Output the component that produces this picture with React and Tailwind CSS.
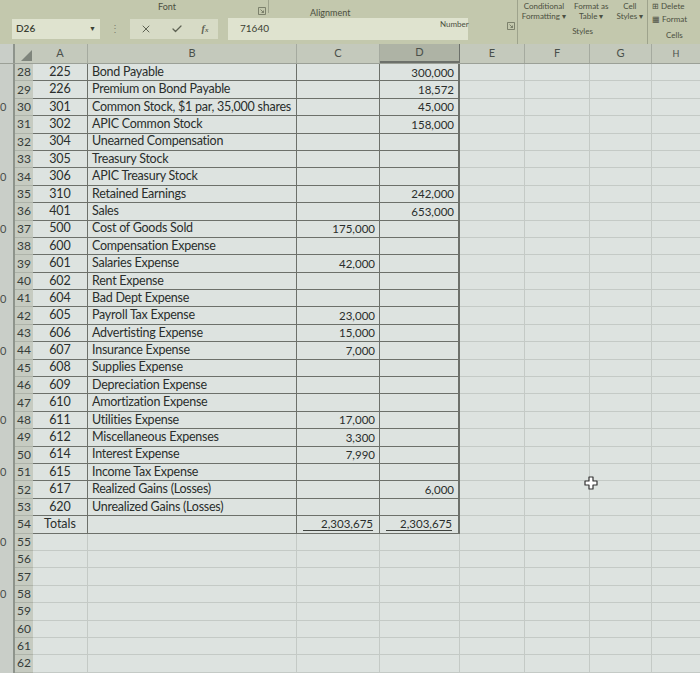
import { X, Check } from "lucide-react";

const rows = [
  [28, "225", "Bond Payable", "", "300,000"],
  [29, "226", "Premium on Bond Payable", "", "18,572"],
  [30, "301", "Common Stock, $1 par, 35,000 shares", "", "45,000"],
  [31, "302", "APIC Common Stock", "", "158,000"],
  [32, "304", "Unearned Compensation", "", ""],
  [33, "305", "Treasury Stock", "", ""],
  [34, "306", "APIC Treasury Stock", "", ""],
  [35, "310", "Retained Earnings", "", "242,000"],
  [36, "401", "Sales", "", "653,000"],
  [37, "500", "Cost of Goods Sold", "175,000", ""],
  [38, "600", "Compensation Expense", "", ""],
  [39, "601", "Salaries Expense", "42,000", ""],
  [40, "602", "Rent Expense", "", ""],
  [41, "604", "Bad Dept Expense", "", ""],
  [42, "605", "Payroll Tax Expense", "23,000", ""],
  [43, "606", "Advertisting Expense", "15,000", ""],
  [44, "607", "Insurance Expense", "7,000", ""],
  [45, "608", "Supplies Expense", "", ""],
  [46, "609", "Depreciation Expense", "", ""],
  [47, "610", "Amortization Expense", "", ""],
  [48, "611", "Utilities Expense", "17,000", ""],
  [49, "612", "Miscellaneous Expenses", "3,300", ""],
  [50, "614", "Interest Expense", "7,990", ""],
  [51, "615", "Income Tax Expense", "", ""],
  [52, "617", "Realized Gains (Losses)", "", "6,000"],
  [53, "620", "Unrealized Gains (Losses)", "", ""],
];

const emptyRows = [55, 56, 57, 58, 59, 60, 61, 62];
const zeroRows = [30, 34, 37, 41, 44, 48, 51, 55, 58];

const dark = "border-[#6c706a]";
const light = "border-[#c4cac6]";

function RowHead({ n }) {
  return (
    <div className="w-[18px] shrink-0 bg-[#c6cbc1] border-b border-[#aeb3a9] text-[12px] text-[#363c39] flex items-center justify-center">
      {n}
    </div>
  );
}

function Side({ n }) {
  return (
    <div className="w-[15px] shrink-0 bg-[#c9cec8] border-r-2 border-[#8e948c] text-[11px] text-[#4a4f4b] flex items-center">
      {zeroRows.includes(n) ? "0" : ""}
    </div>
  );
}

function LightTail() {
  return (
    <>
      <div className={`w-[65px] shrink-0 border-r border-b ${light}`} />
      <div className={`w-[65px] shrink-0 border-r border-b ${light}`} />
      <div className={`w-[62px] shrink-0 border-r border-b ${light}`} />
      <div className={`flex-1 border-b ${light}`} />
    </>
  );
}

function Launcher() {
  return (
    <svg width="8" height="8" viewBox="0 0 8 8" className="inline-block">
      <path d="M0.5 0.5h7v7h-7z" fill="none" stroke="#6a6e5c" strokeWidth="0.8" />
      <path d="M2.5 2.5l3 3M5.5 3.5v2h-2" fill="none" stroke="#6a6e5c" strokeWidth="0.8" />
    </svg>
  );
}

function PlusCursor() {
  return (
    <svg width="14" height="14" viewBox="0 0 14 14" className="absolute left-[584px] top-[476px]">
      <path d="M5 1h4v4h4v4H9v4H5V9H1V5h4z" fill="#fff" stroke="#333" strokeWidth="1.2" strokeLinejoin="round" />
    </svg>
  );
}

export default function App() {
  return (
    <div className="relative w-[700px] h-[673px] overflow-hidden bg-[#dde3e0] font-['Lato',sans-serif] text-[#2a2e2c]">
      {/* ribbon + formula bar */}
      <div className="h-[44px] flex bg-[#c3c8ad]">
        <div className="w-[470px] flex flex-col">
          <div className="h-[13px] flex items-end text-[9px] text-[#4b4f40] relative">
            <span className="absolute left-[158px] top-0">Font</span>
            <span className="absolute left-[258px] top-[3px]"><Launcher /></span>
            <span className="absolute left-[268px] top-0 h-[13px] border-l border-[#9ea38c]" />
            <span className="absolute left-[310px] top-[6px]">Alignment</span>
          </div>
          <div className="h-[31px] flex items-center gap-[10px] pl-[12px] pr-[2px]">
            <div className="w-[88px] h-[20px] bg-[#dfe3cf] flex items-center justify-between px-[4px] text-[10px] font-semibold text-[#3b3f33]">
              <span>D26</span>
              <span className="text-[7px]">▼</span>
            </div>
            <span className="text-[10px] text-[#7d826e]">⋮</span>
            <div className="w-[88px] h-[20px] bg-[#d7dbc6] flex items-center justify-around text-[#5e6253]">
              <X size={12} strokeWidth={2} />
              <Check size={12} strokeWidth={2.5} />
              <span className="font-['Liberation_Serif',serif] italic font-bold text-[10px]">f<span className="text-[7px]">x</span></span>
            </div>
            <div className="flex-1 h-[22px] bg-[#dfe3cf] flex items-center pl-[12px] text-[10px] text-[#3b3f33]">
              71640
            </div>
          </div>
        </div>
        <div className="flex-1 flex text-[8px] text-[#4b4f40]">
          <div className="w-[48px] border-r border-[#9ea38c] flex flex-col justify-end items-end pb-[14px] pr-[2px] relative">
            <span className="absolute left-[-30px] top-[18px]">Number</span>
            <Launcher />
          </div>
          <div className="w-[130px] border-r border-[#9ea38c] flex flex-col items-center pt-[1px]">
            <div className="flex gap-[8px] leading-[10px]">
              <div className="flex flex-col items-center"><span>Conditional</span><span>Formatting ▾</span></div>
              <div className="flex flex-col items-center"><span>Format as</span><span>Table ▾</span></div>
              <div className="flex flex-col items-center"><span>Cell</span><span>Styles ▾</span></div>
            </div>
            <span className="mt-[4px]">Styles</span>
          </div>
          <div className="flex-1 flex flex-col pl-[4px] pt-[1px] leading-[10px]">
            <span>⊞ Delete</span>
            <span className="mt-[3px]">▦ Format</span>
            <span className="mt-[6px] ml-[14px]">Cells</span>
          </div>
        </div>
      </div>

      {/* column headers */}
      <div className="h-[20px] flex bg-[#c4c9bc] border-b border-[#9ba097] text-[11px] text-[#4a504b]">
        <div className="w-[15px] shrink-0 bg-[#c9cec8] border-r-2 border-[#8e948c]" />
        <div className="w-[18px] shrink-0 flex items-end justify-end pr-[1px] pb-[2px]">
          <svg width="11" height="11" viewBox="0 0 11 11"><path d="M11 0v11H0z" fill="#7f857c" /></svg>
        </div>
        <div className="w-[55px] shrink-0 flex items-center justify-center border-r border-[#a5aa9f]">A</div>
        <div className="w-[209px] shrink-0 flex items-center justify-center border-r border-[#a5aa9f]">B</div>
        <div className="w-[83px] shrink-0 flex items-center justify-center border-r border-[#a5aa9f]">C</div>
        <div className="w-[80px] shrink-0 flex items-center justify-center bg-[#aeb3a5] border-r border-b-2 border-[#6c706a]">D</div>
        <div className="w-[65px] shrink-0 flex items-center justify-center border-r border-[#a5aa9f]">E</div>
        <div className="w-[65px] shrink-0 flex items-center justify-center border-r border-[#a5aa9f]">F</div>
        <div className="w-[62px] shrink-0 flex items-center justify-center border-r border-[#a5aa9f]">G</div>
        <div className="flex-1 flex items-center justify-center text-[9px]">H</div>
      </div>

      {/* data rows */}
      <div className="text-[12.5px]">
        {rows.map(([n, a, b, c, d]) => (
          <div key={n} className="h-[17.4px] flex">
            <Side n={n} />
            <RowHead n={n} />
            <div className={`w-[55px] shrink-0 border-r border-b ${dark} flex items-center justify-center`}>{a}</div>
            <div className={`w-[209px] shrink-0 border-r border-b ${dark} flex items-center pl-[4px] whitespace-nowrap overflow-hidden tracking-[-0.25px]`}>{b}</div>
            <div className={`w-[83px] shrink-0 border-r border-b ${dark} flex items-center justify-end pr-[4px] text-[11.5px]`}>{c}</div>
            <div className={`w-[80px] shrink-0 border-r-2 border-b ${dark} flex items-center justify-end pr-[4px] text-[11.5px]`}>{d}</div>
            <LightTail />
          </div>
        ))}
        <div className="h-[17.4px] flex">
          <Side n={54} />
          <RowHead n={54} />
          <div className={`w-[55px] shrink-0 border-r border-b ${dark} flex items-center justify-center`}>Totals</div>
          <div className={`w-[209px] shrink-0 border-r border-b ${dark}`} />
          <div className={`w-[83px] shrink-0 border-r border-b ${dark} flex items-center px-[6px] text-[11.5px]`}>
            <span className="flex-1 text-right border-b border-[#3f433f] leading-[12px]">2,303,675</span>
          </div>
          <div className={`w-[80px] shrink-0 border-r-2 border-b ${dark} flex items-center px-[6px] text-[11.5px]`}>
            <span className="flex-1 text-right border-b border-[#3f433f] leading-[12px]">2,303,675</span>
          </div>
          <LightTail />
        </div>
        {emptyRows.map((n) => (
          <div key={n} className="h-[17.4px] flex">
            <Side n={n} />
            <RowHead n={n} />
            <div className={`w-[55px] shrink-0 border-r border-b ${light}`} />
            <div className={`w-[209px] shrink-0 border-r border-b ${light}`} />
            <div className={`w-[83px] shrink-0 border-r border-b ${light}`} />
            <div className={`w-[80px] shrink-0 border-r border-b ${light}`} />
            <LightTail />
          </div>
        ))}
      </div>

      <PlusCursor />
    </div>
  );
}
